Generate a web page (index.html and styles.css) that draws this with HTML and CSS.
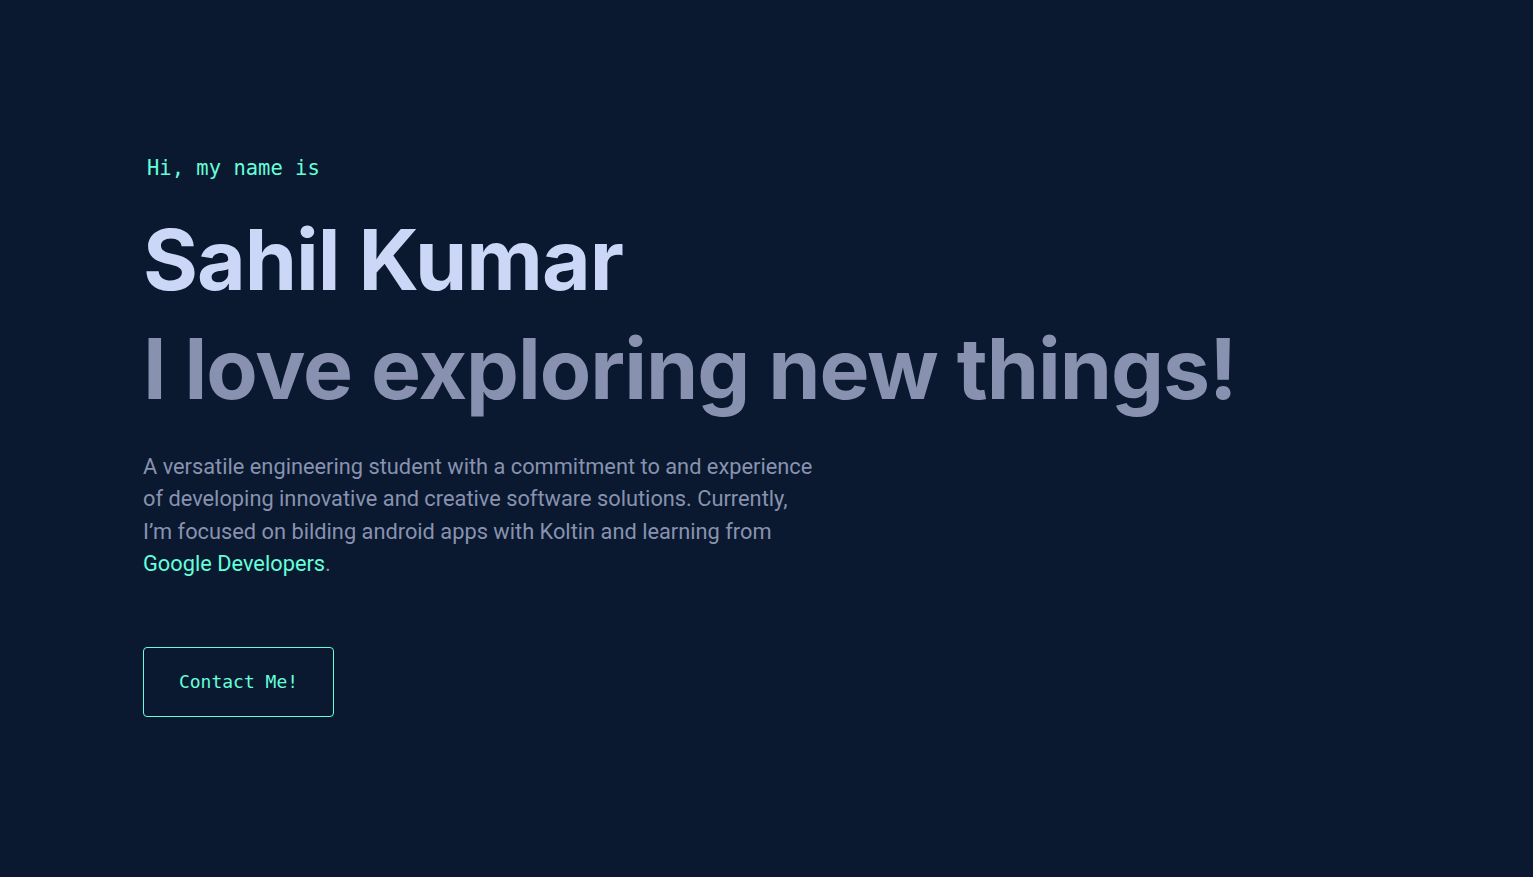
FILE: index.html
```html
<!DOCTYPE html>
<html lang="en">
<head>
<meta charset="utf-8">
<title>Sahil Kumar</title>
<link rel="stylesheet" href="styles.css">
</head>
<body>
<main class="hero">
  <p class="hero-intro">Hi, my name is</p>
  <h1 class="hero-name">Sahil Kumar</h1>
  <h2 class="hero-tagline">I love exploring new things!</h2>
  <p class="hero-text">A versatile engineering student with a commitment to and experience of developing innovative and creative software solutions. Currently, I’m focused on bilding android apps with Koltin and learning from <a class="hero-link" href="#">Google Developers</a>.</p>
  <a class="hero-button" href="#">Contact Me!</a>
</main>
</body>
</html>
```

FILE: styles.css
```css
html, body {
  margin: 0;
  padding: 0;
  background: #0a192f;
  height: 100%;
}

.hero {
  display: flex;
  flex-direction: column;
  align-items: flex-start;
  padding: 154px 0 0 143px;
  box-sizing: border-box;
  min-height: 877px;
}

.hero-intro {
  margin: 0 0 32px 4px;
  font-family: "DejaVu Sans Mono", "Liberation Mono", monospace;
  font-size: 20.5px;
  line-height: 28px;
  color: #64ffda;
}

.hero-name {
  margin: 0;
  font-family: Inter, "Noto Sans", sans-serif;
  font-weight: 700;
  font-size: 84px;
  line-height: 1.1;
  letter-spacing: -1px;
  color: #ccd6f6;
}

.hero-tagline {
  margin: 17px 0 0;
  font-family: Inter, "Noto Sans", sans-serif;
  font-weight: 700;
  font-size: 84px;
  line-height: 1.1;
  letter-spacing: -1px;
  color: #8892b0;
}

.hero-text {
  margin: 35px 0 0;
  max-width: 673px;
  font-family: Roboto, "Noto Sans", sans-serif;
  font-size: 21.8px;
  line-height: 32.5px;
  color: #8892b0;
}

.hero-link {
  color: #64ffda;
  text-decoration: none;
  white-space: nowrap;
}

.hero-button {
  margin-top: 66px;
  display: flex;
  align-items: center;
  justify-content: center;
  width: 191px;
  height: 70px;
  box-sizing: border-box;
  border: 1px solid #64ffda;
  border-radius: 4px;
  font-family: "DejaVu Sans Mono", "Liberation Mono", monospace;
  font-size: 18px;
  color: #64ffda;
  text-decoration: none;
}
```
